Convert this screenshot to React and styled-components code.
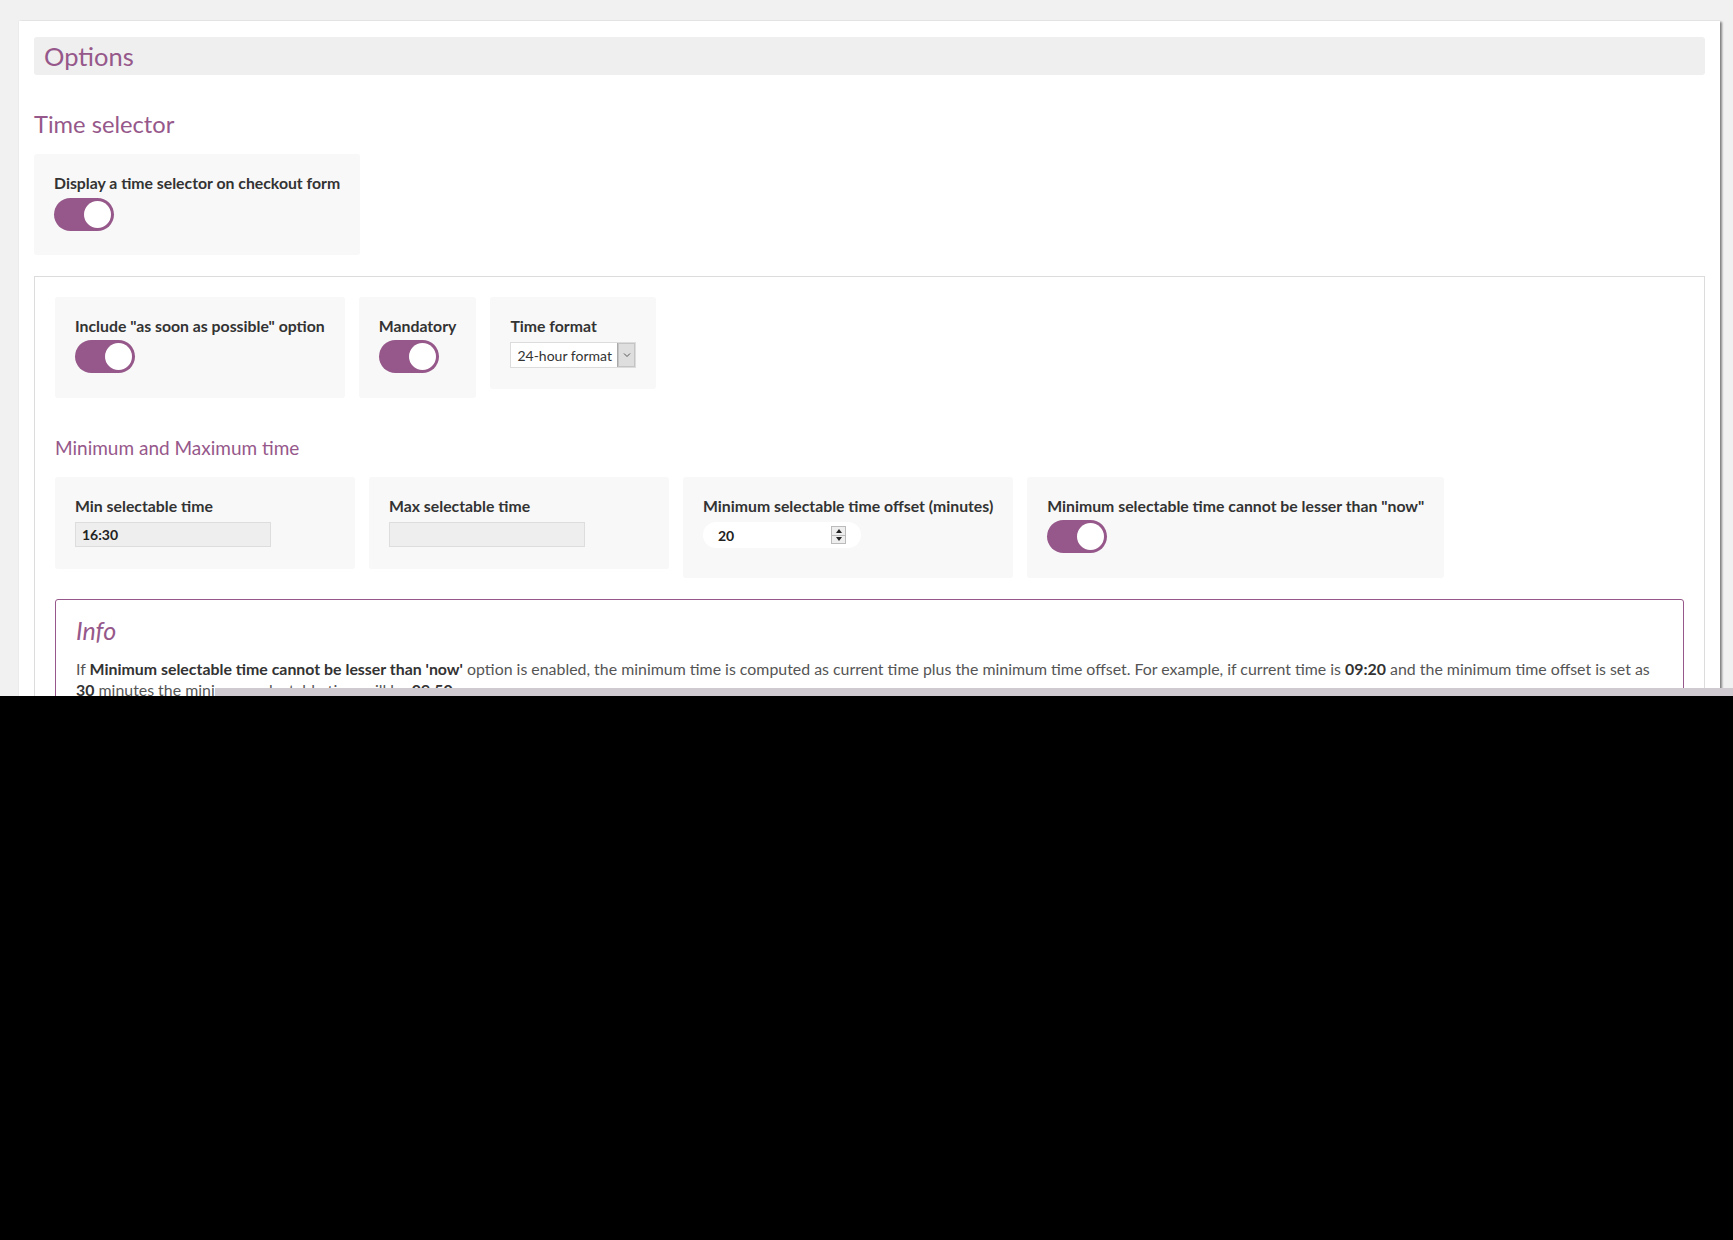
import React from "react";
import styled, { createGlobalStyle } from "styled-components";

const GlobalStyle = createGlobalStyle`
  body {
    margin: 0;
    background: #000;
    font-family: Lato, "Open Sans", Arial, sans-serif;
  }
`;

const purple = "#96588a";

const Viewport = styled.div`
  position: relative;
  height: 696px;
  overflow: hidden;
  background: #f1f1f1;
  padding: 21px 13px 0 19px;
  box-sizing: border-box;
`;

const Card = styled.div`
  background: #fff;
  padding: 16px 15px 40px 15px;
  min-height: 800px;
  box-shadow: 2px 1px 2px rgba(0, 0, 0, 0.45), 0 0 1px rgba(0, 0, 0, 0.15);
`;

const OptionsBar = styled.div`
  height: 38px;
  display: flex;
  align-items: center;
  padding-left: 10px;
  background: #efefef;
  border-radius: 3px;
  color: ${purple};
  font-size: 25.5px;
`;

const SectionTitle = styled.h2`
  margin: 34px 0 14px;
  color: ${purple};
  font-size: 23.7px;
  font-weight: 400;
  line-height: 31px;
`;

const SubTitle = styled.h3`
  margin: 38px 0 17px;
  color: ${purple};
  font-size: 19px;
  font-weight: 400;
  line-height: 24px;
`;

const Row = styled.div`
  display: flex;
  align-items: flex-start;
  gap: 14px;
`;

const Field = styled.div`
  box-sizing: border-box;
  min-width: ${(p) => p.$min || 0}px;
  height: ${(p) => p.$h}px;
  padding: 20px;
  background: #f8f8f8;
  border-radius: 3px;
`;

const Label = styled.div`
  color: #333;
  font-size: 15.8px;
  font-weight: 700;
  line-height: 18px;
  white-space: nowrap;
  margin-bottom: ${(p) => p.$gap || 5}px;
`;

const Panel = styled.div`
  margin-top: 21px;
  border: 1px solid #dcdcdc;
  padding: 20px;
`;

const Track = styled.div`
  position: relative;
  width: 60px;
  height: 33px;
  border-radius: 17px;
  background: ${purple};
`;

const Knob = styled.span`
  position: absolute;
  top: 3px;
  right: 3px;
  width: 27px;
  height: 27px;
  border-radius: 50%;
  background: #fff;
`;

const Toggle = () => (
  <Track>
    <Knob />
  </Track>
);

const Select = styled.div`
  display: flex;
  width: 126px;
  height: 26px;
  box-sizing: border-box;
  border: 1px solid #dcdcdc;
  background: #fff;
  font-size: 14px;
  color: #333;
`;

const SelectText = styled.span`
  flex: 1;
  display: flex;
  align-items: center;
  padding-left: 6px;
  white-space: nowrap;
`;

const SelectButton = styled.span`
  width: 17px;
  flex: none;
  display: flex;
  align-items: center;
  justify-content: center;
  background: #dedede;
  border-left: 1px solid #aaa;
  box-shadow: inset 0 0 0 1px #c4c4c4;
`;

const TextInput = styled.div`
  width: 196px;
  height: 25px;
  box-sizing: border-box;
  display: flex;
  align-items: center;
  padding-left: 6px;
  background: #eee;
  border: 1px solid #ddd;
  color: #222;
  font-size: 14px;
  font-weight: 700;
`;

const NumberInput = styled.div`
  width: 158px;
  height: 26px;
  box-sizing: border-box;
  display: flex;
  align-items: center;
  justify-content: space-between;
  padding: 0 15px 0 15px;
  margin-bottom: 9px;
  background: #fff;
  border-radius: 13px;
  color: #222;
  font-size: 14px;
  font-weight: 700;
`;

const Spinner = styled.span`
  display: flex;
  flex-direction: column;
  width: 13px;
  height: 16px;
  border: 1px solid #bbb;
  background: #eee;
`;

const SpinHalf = styled.span`
  flex: 1;
  display: flex;
  align-items: center;
  justify-content: center;
  & + & {
    border-top: 1px solid #bbb;
  }
`;

const InfoBox = styled.div`
  margin-top: 21px;
  border: 1px solid ${purple};
  border-radius: 3px;
  padding: 14px 20px 20px;
`;

const InfoTitle = styled.h3`
  margin: 0 0 12px;
  color: ${purple};
  font-size: 25px;
  font-style: italic;
  font-weight: 400;
  line-height: 32px;
`;

const InfoText = styled.p`
  margin: 0;
  color: #555;
  font-size: 15.9px;
  line-height: 21px;
  b {
    color: #333;
  }
`;

const ScrollThumb = styled.div`
  position: absolute;
  left: 215px;
  right: 0;
  top: 688px;
  height: 8px;
  background: #cfcacf;
`;

const Caret = () => (
  <svg width="8" height="6" viewBox="0 0 8 6">
    <path d="M1 1.5 L4 4.5 L7 1.5" fill="none" stroke="#555" strokeWidth="1" />
  </svg>
);

const Tri = ({ up }) => (
  <svg width="6" height="4" viewBox="0 0 6 4">
    <path d={up ? "M0 4 L3 0 L6 4 Z" : "M0 0 L3 4 L6 0 Z"} fill="#222" />
  </svg>
);

const App = () => {
  return (
    <Viewport>
      <GlobalStyle />
      <Card>
        <OptionsBar>Options</OptionsBar>
        <SectionTitle>Time selector</SectionTitle>
        <Row>
          <Field $h={101}>
            <Label $gap={6}>Display a time selector on checkout form</Label>
            <Toggle />
          </Field>
        </Row>
        <Panel>
          <Row>
            <Field $h={101}>
              <Label>Include "as soon as possible" option</Label>
              <Toggle />
            </Field>
            <Field $h={101}>
              <Label>Mandatory</Label>
              <Toggle />
            </Field>
            <Field $h={92}>
              <Label $gap={7}>Time format</Label>
              <Select>
                <SelectText>24-hour format</SelectText>
                <SelectButton>
                  <Caret />
                </SelectButton>
              </Select>
            </Field>
          </Row>
          <SubTitle>Minimum and Maximum time</SubTitle>
          <Row>
            <Field $min={300} $h={92}>
              <Label $gap={7}>Min selectable time</Label>
              <TextInput>16:30</TextInput>
            </Field>
            <Field $min={300} $h={92}>
              <Label $gap={7}>Max selectable time</Label>
              <TextInput />
            </Field>
            <Field $h={101}>
              <Label $gap={7}>Minimum selectable time offset (minutes)</Label>
              <NumberInput>
                20
                <Spinner>
                  <SpinHalf>
                    <Tri up />
                  </SpinHalf>
                  <SpinHalf>
                    <Tri />
                  </SpinHalf>
                </Spinner>
              </NumberInput>
            </Field>
            <Field $h={101}>
              <Label>Minimum selectable time cannot be lesser than "now"</Label>
              <Toggle />
            </Field>
          </Row>
          <InfoBox>
            <InfoTitle>Info</InfoTitle>
            <InfoText>
              If <b>Minimum selectable time cannot be lesser than 'now'</b>{" "}
              option is enabled, the minimum time is computed as current time
              plus the minimum time offset. For example, if current time is{" "}
              <b>09:20</b> and the minimum time offset is set as <b>30</b>{" "}
              minutes the minimum selectable time will be <b>09:50</b>.
            </InfoText>
          </InfoBox>
        </Panel>
      </Card>
      <ScrollThumb />
    </Viewport>
  );
};

export default App;
